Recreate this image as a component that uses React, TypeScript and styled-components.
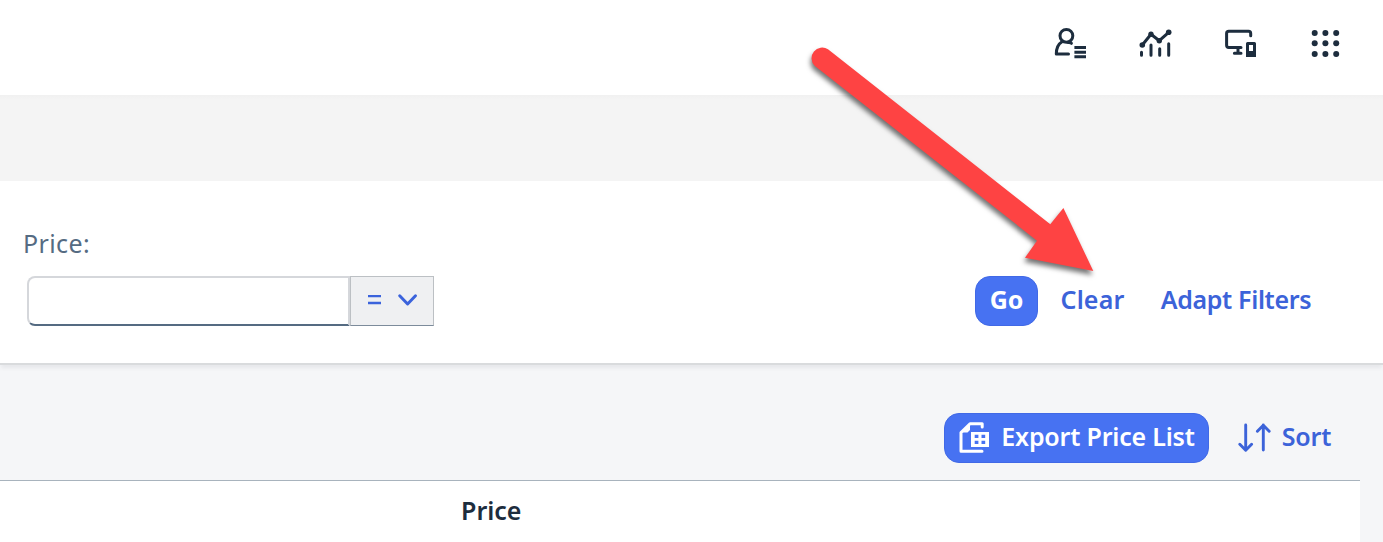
import React from 'react';
import styled, { createGlobalStyle } from 'styled-components';

const GlobalStyle = createGlobalStyle`
  * { box-sizing: border-box; }
  body { margin: 0; background: #f5f6f7; font-family: "Noto Sans", "Open Sans", sans-serif; }
`;

const Page = styled.div`
  position: relative;
  width: 1383px;
  height: 542px;
  overflow: hidden;
  display: flex;
  flex-direction: column;
  background: #f5f6f8;
`;

const ShellBar = styled.header`
  height: 95px;
  flex: none;
  background: #fff;
  display: flex;
  justify-content: flex-end;
  padding: 24px 37px 0 0;
  gap: 45px;
  color: #1d2d3e;
`;

const Icon = styled.svg<{ $w: number; $h: number }>`
  width: ${(p) => p.$w}px;
  height: ${(p) => p.$h}px;
  flex: none;
  display: block;
  fill: none;
  stroke: currentColor;
  stroke-width: 3;
  stroke-linecap: round;
  stroke-linejoin: round;
`;

const TitleStrip = styled.div`
  height: 86px;
  flex: none;
  background: linear-gradient(#f1f1f1, #f4f4f4 5px);
`;

const FilterBar = styled.section`
  height: 184px;
  flex: none;
  background: #fff;
  border-bottom: 2px solid #d9dbdd;
  box-shadow: 0 4px 4px -1px rgba(60, 70, 80, 0.08);
  display: flex;
  justify-content: space-between;
  padding: 0 58px 0 24px;
`;

const Field = styled.div`
  display: flex;
  flex-direction: column;
  padding-top: 45px;
`;

const Label = styled.label`
  height: 34px;
  line-height: 34px;
  font-size: 25px;
  color: #556b82;
  margin-left: -1px;
  letter-spacing: 0.4px;
`;

const InputGroup = styled.div`
  display: flex;
  margin: 16px 0 0 3px;
`;

const Input = styled.input`
  width: 323px;
  height: 50px;
  border: 2px solid #d5d7db;
  border-bottom-color: #556b82;
  border-radius: 8px 0 0 8px;
  background: #fff;
  outline: none;
`;

const Operator = styled.button`
  width: 84px;
  height: 50px;
  border: 1px solid #bcc0c4;
  border-bottom-color: #7c8b9b;
  background: #eff0f2;
  color: #3b63dc;
  padding: 0;
`;

const Actions = styled.div`
  display: flex;
  align-items: center;
  height: 50px;
  margin-top: 95px;
`;

const Button = styled.button<{ $primary?: boolean; $w: number; $track?: number; $weight?: number }>`
  width: ${(p) => p.$w}px;
  height: 50px;
  padding: 0;
  border: ${(p) => (p.$primary ? '1px solid #4169e6' : '0')};
  border-radius: 15px;
  background: ${(p) => (p.$primary ? '#4772f2' : 'transparent')};
  color: ${(p) => (p.$primary ? '#fff' : '#3c63d9')};
  display: flex;
  align-items: center;
  justify-content: center;
  white-space: nowrap;
  font-family: inherit;
  font-size: 25px;
  font-weight: ${(p) => p.$weight ?? 580};
  line-height: 34px;
  letter-spacing: ${(p) => p.$track ?? 0}px;
`;

const TableToolbar = styled.div`
  height: 115px;
  flex: none;
  display: flex;
  justify-content: flex-end;
  padding: 48px 52px 0 0;
  gap: 29px;
`;

const Caption = styled.span<{ $gap?: number }>`
  margin-left: ${(p) => p.$gap ?? 0}px;
  padding-bottom: 4px;
`;

const Table = styled.div`
  width: 1360px;
  flex: 1;
  background: #fff;
  border-top: 1px solid #a8b3bd;
`;

const ColumnHeader = styled.div`
  padding: 12px 0 0 461px;
  font-size: 25px;
  font-weight: 580;
  line-height: 34px;
  color: #1d2d3e;
`;

const Pointer = styled.svg`
  position: absolute;
  left: 800px;
  top: 30px;
  width: 310px;
  height: 260px;
  filter: drop-shadow(-1px 4px 2.5px rgba(0, 0, 0, 0.55));
  pointer-events: none;
`;

export default function App() {
  return (
    <Page>
      <GlobalStyle />
      <ShellBar>
        <Icon $w={40} $h={40} viewBox="1050 24 40 40">
          <circle cx="1066.4" cy="35.8" r="6.4" />
          <path d="M1062 41.8C1058 44.3 1056.3 47.8 1056.3 54H1068.5M1068 42.5Q1070.5 42.3 1071.4 43.3" />
          <path strokeLinecap="butt" d="M1074.4 47.6H1086M1074.4 52.3H1086M1074.4 56.7H1086" />
        </Icon>
        <Icon $w={40} $h={40} viewBox="1135 24 40 40">
          <path d="M1142.3 45L1151 34.3L1159.3 40.7L1168.7 32.3" />
          <g fill="currentColor" stroke="none">
            <circle cx="1142.3" cy="45" r="2.8" />
            <circle cx="1151" cy="34.3" r="2.7" />
            <circle cx="1159.3" cy="40.7" r="2.7" />
            <circle cx="1168.7" cy="32.3" r="2.8" />
          </g>
          <path d="M1141.5 52.2V55.3M1151 45V55.3M1159.7 48.8V55.3M1168.7 43.8V55.3" />
        </Icon>
        <Icon $w={40} $h={40} viewBox="1220 24 40 40">
          <path d="M1250.7 35.8V33.4Q1250.7 31.2 1248.5 31.2H1228.8Q1226.6 31.2 1226.6 33.4V45.2Q1226.6 47.4 1228.8 47.4H1241M1238 48V53M1234.4 53.2H1241" />
          <path fill="currentColor" stroke="none" fillRule="evenodd" d="M1247.5 42H1254.5Q1256 42 1256 43.5V57H1246V43.5Q1246 42 1247.5 42ZM1249 45V51H1253V45Z" />
        </Icon>
        <Icon $w={41} $h={40} viewBox="1305 24 41 40">
          {[33, 43.2, 54].map((y) =>
            [1314.7, 1325.4, 1336.2].map((x) => (
              <circle key={`${x}-${y}`} cx={x} cy={y} r="3" fill="currentColor" stroke="none" />
            )),
          )}
        </Icon>
      </ShellBar>
      <TitleStrip />
      <FilterBar>
        <Field>
          <Label htmlFor="price">Price:</Label>
          <InputGroup>
            <Input id="price" />
            <Operator aria-label="Equals">
              <Icon $w={82} $h={48} viewBox="351 277 82 48">
                <path strokeLinecap="butt" strokeWidth="2.3" d="M368 296.2H381M368 303H381" />
                <path d="M399.7 295.8L407.6 304L415.5 295.8" />
              </Icon>
            </Operator>
          </InputGroup>
        </Field>
        <Actions>
          <Button $primary $w={63} $weight={700}><Caption>Go</Caption></Button>
          <Button $w={109} $track={0.15}><Caption>Clear</Caption></Button>
          <Button $w={178} $track={-0.35}><Caption>Adapt Filters</Caption></Button>
        </Actions>
      </FilterBar>
      <TableToolbar>
        <Button $primary $w={265} $track={-0.2} $weight={630}>
          <Icon $w={32} $h={34} viewBox="958 421 32 34">
            <path d="M982.2 427V423.7H970L961 432.5V451.3H982" />
            <path d="M970 423.7V430L967.5 432.5H961Z" fill="currentColor" stroke="none" />
            <path fill="currentColor" stroke="none" fillRule="evenodd" d="M971 432H989V447H971ZM974.7 434.8V438H978.4V434.8ZM981.5 434.8V438H985.2V434.8ZM974.7 440.8V444H978.4V440.8ZM981.5 440.8V444H985.2V440.8Z" />
          </Icon>
          <Caption $gap={11}>Export Price List</Caption>
        </Button>
        <Button $w={93} $track={-0.2}>
          <Icon $w={34} $h={32} viewBox="1238 422 34 32">
            <path strokeWidth="2.9" d="M1245.7 425V450M1239.8 444.2L1245.7 450.2L1251.6 444.2M1263.3 450V425M1257.4 431.3L1263.3 425.3L1269.2 431.3" />
          </Icon>
          <Caption $gap={10}>Sort</Caption>
        </Button>
      </TableToolbar>
      <Table>
        <ColumnHeader>Price</ColumnHeader>
      </Table>
      <Pointer viewBox="800 30 310 260">
        <path fill="#fe4343" d="M828 49.3L1050.3 224.3L1063.4 208L1093.3 271L1025 257.7L1037 240.7L814.6 65.8A10.7 10.7 0 0 1 828 49.3Z" />
      </Pointer>
    </Page>
  );
}
